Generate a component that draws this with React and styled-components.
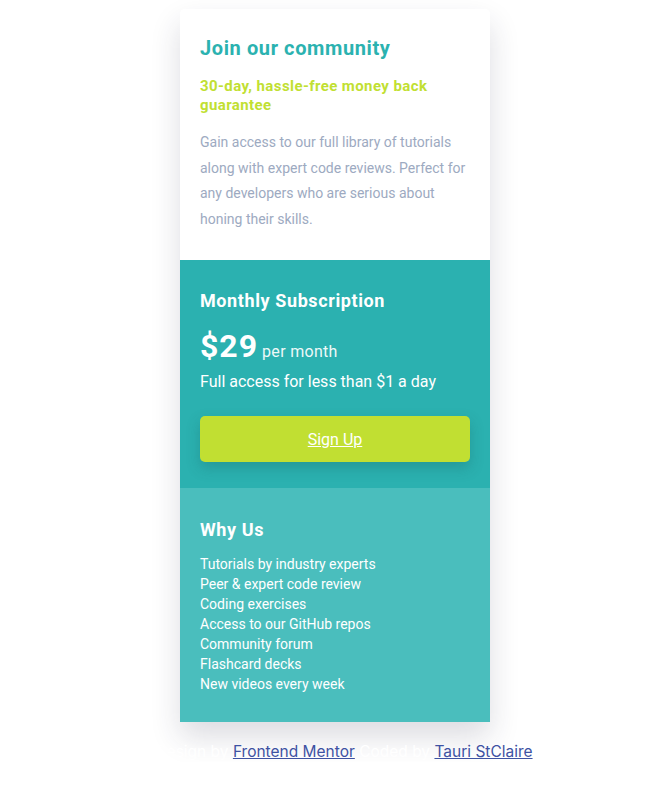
import React from "react";
import styled, { createGlobalStyle } from "styled-components";

const font = `"Roboto", "Liberation Sans", sans-serif`;

const Global = createGlobalStyle`
  * { box-sizing: border-box; }
  body {
    margin: 0;
    background: #ffffff;
    font-family: ${font};
  }
`;

const Page = styled.main`
  display: flex;
  flex-direction: column;
  align-items: center;
  padding-top: 9px;
`;

const Card = styled.article`
  width: 310px;
  border-radius: 5px 5px 0 0;
  overflow: hidden;
  box-shadow: 0 15px 30px rgba(40, 40, 70, 0.16);
`;

const Section = styled.section`
  background: ${(p) => p.bg};
  padding: ${(p) => p.pad};
  color: #ffffff;
`;

const Title = styled.h1`
  margin: 0 0 17px;
  font-size: 20px;
  line-height: 24px;
  font-weight: 700;
  letter-spacing: 0.6px;
  color: #2bb2b0;
`;

const Guarantee = styled.h2`
  margin: 0 0 15px;
  font-size: 15px;
  line-height: 19px;
  font-weight: 700;
  letter-spacing: 0.4px;
  color: #c1df32;
`;

const Intro = styled.p`
  margin: 0;
  font-size: 14px;
  line-height: 25.5px;
  color: #9daac1;
`;

const Heading = styled.h3`
  margin: 0 0 ${(p) => p.gap || 12}px;
  font-size: 18px;
  line-height: 22px;
  font-weight: 700;
  letter-spacing: 0.6px;
`;

const Price = styled.div`
  display: flex;
  align-items: baseline;
  gap: 4px;
`;

const Amount = styled.span`
  font-size: 32px;
  line-height: 38px;
  font-weight: 700;
  letter-spacing: 1px;
`;

const Per = styled.span`
  font-size: 16px;
  letter-spacing: 0.3px;
  opacity: 0.92;
`;

const Note = styled.p`
  margin: 7px 0 0;
  font-size: 16px;
  line-height: 20px;
`;

const Button = styled.a`
  display: flex;
  align-items: center;
  justify-content: center;
  margin-top: 24px;
  height: 46px;
  border-radius: 5px;
  background: #c1df32;
  color: #ffffff;
  font-size: 16px;
  text-decoration: underline;
  box-shadow: 0 6px 14px rgba(20, 80, 80, 0.25);
  cursor: pointer;
`;

const List = styled.ul`
  list-style: none;
  margin: 0;
  padding: 0;
  font-size: 14px;
  line-height: 20px;
`;

const Attribution = styled.footer`
  margin-top: 20px;
  padding-left: 18px;
  font-family: "Inter", sans-serif;
  font-size: 15.5px;
  line-height: 20px;
  color: #ffffff;
  text-align: center;

  a {
    color: #3e52a3;
  }
`;

export default function App() {
  const reasons = [
    "Tutorials by industry experts",
    "Peer & expert code review",
    "Coding exercises",
    "Access to our GitHub repos",
    "Community forum",
    "Flashcard decks",
    "New videos every week",
  ];

  return (
    <>
      <Global />
      <Page>
        <Card>
          <Section bg="#ffffff" pad="27px 20px 28px">
            <Title>Join our community</Title>
            <Guarantee>30-day, hassle-free money back guarantee</Guarantee>
            <Intro>
              Gain access to our full library of tutorials along with expert code
              reviews. Perfect for any developers who are serious about honing
              their skills.
            </Intro>
          </Section>
          <Section bg="#2bb1b0" pad="30px 20px 26px">
            <Heading gap={15}>Monthly Subscription</Heading>
            <Price>
              <Amount>$29</Amount>
              <Per>per month</Per>
            </Price>
            <Note>Full access for less than $1 a day</Note>
            <Button>Sign Up</Button>
          </Section>
          <Section bg="#4abebd" pad="31px 20px 28px">
            <Heading gap={13}>Why Us</Heading>
            <List>
              {reasons.map((r) => (
                <li key={r}>{r}</li>
              ))}
            </List>
          </Section>
        </Card>
        <Attribution>
          Design by <a href="#">Frontend Mentor</a> Coded by{" "}
          <a href="#">Tauri StClaire</a>
        </Attribution>
      </Page>
    </>
  );
}
